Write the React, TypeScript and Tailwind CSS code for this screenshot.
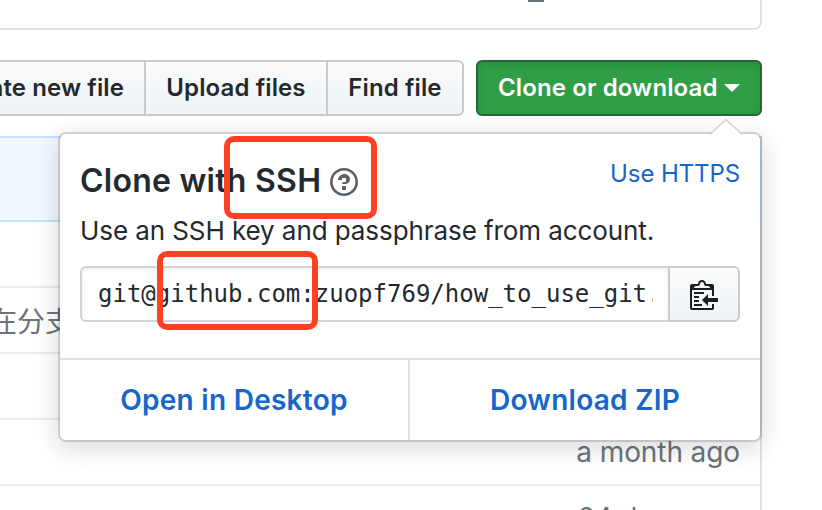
import React from 'react';

const commits = [
  { message: '', age: '' },
  { message: '在分支', age: '' },
  { message: '', age: '' },
  { message: '', age: 'a month ago' },
  { message: '', age: '24 days ago' },
];

function Toolbar() {
  const group =
    'flex h-14 items-center justify-center border-y-2 border-r-2 border-[#c9cbcd] bg-gradient-to-b from-[#fafbfc] to-[#eff3f6] whitespace-nowrap';
  return (
    <div className="mt-[30px] flex h-14 w-[762px] text-[24px] font-semibold tracking-[0.11px]">
      <div className={group + ' w-[146px] justify-end pr-5'}>
        <span className="shrink-0">Create new file</span>
      </div>
      <div className={group + ' w-[182px]'}>
        <span>Upload files</span>
      </div>
      <div className={group + ' w-[136px] rounded-r-md'}>
        <span>Find file</span>
      </div>
      <div className="ml-3 flex w-[286px] items-center rounded-md border-2 border-[#28633a] bg-[#2f9e46] pl-5 text-white shadow-[inset_0_3px_6px_rgba(20,70,32,0.2)]">
        <span className="whitespace-nowrap">Clone or download</span>
        <span className="ml-[6px] h-0 w-0 border-x-8 border-t-8 border-x-transparent border-t-white" />
      </div>
    </div>
  );
}

function FileTable() {
  return (
    <div className="mt-5 h-[400px] w-[762px] text-[28px] text-[#6a737d]">
      <div className="h-[86px] border-y-2 border-r-2 border-[#c8e1ff] bg-[#f1f8ff]" />
      <div className="border-r-2 border-[#dfe2e5]">
        {commits.map((commit, i) => (
          <div
            key={i}
            className="flex h-[66px] items-center justify-between overflow-hidden border-b-2 border-[#eaecef] pr-5 whitespace-nowrap"
          >
            <span className="-ml-[11px] font-['Noto_Sans_CJK_SC',sans-serif]">{commit.message}</span>
            <span className="tracking-[-0.1px]">{commit.age}</span>
          </div>
        ))}
      </div>
    </div>
  );
}

function QuestionIcon() {
  return (
    <svg width="28" height="32" viewBox="0 0 14 16" fill="#586069" className="ml-[9px]">
      <path d="M6 10h2v2H6v-2zm4-3.5C10 8.64 8 9 8 9H6c0-.55.45-1 1-1h.5c.28 0 .5-.22.5-.5v-1c0-.28-.22-.5-.5-.5h-1c-.28 0-.5.22-.5.5V7H4c0-1.5 1.5-3 3-3s3 1 3 2.5zM7 2.3c3.14 0 5.7 2.56 5.7 5.7s-2.56 5.7-5.7 5.7A5.71 5.71 0 0 1 1.3 8c0-3.14 2.56-5.7 5.7-5.7zM7 1C3.14 1 0 4.14 0 8s3.14 7 7 7 7-3.14 7-7-3.14-7-7-7z" />
    </svg>
  );
}

function ClippyIcon() {
  return (
    <svg width="28" height="32" viewBox="0 0 14 16" fill="#1b1f23">
      <path d="M2 13h4v1H2v-1zm5-6H2v1h5V7zm2 3V8l-3 3 3 3v-2h5v-2H9zM4.5 9H2v1h2.5V9zM2 12h2.5v-1H2v1zm9 1h1v2c-.02.28-.11.52-.3.7-.19.18-.42.28-.7.3H1c-.55 0-1-.45-1-1V4c0-.55.45-1 1-1h3c0-1.11.89-2 2-2 1.11 0 2 .89 2 2h3c.55 0 1 .45 1 1v5h-1V6H1v9h10v-2zM2 5h8c0-.55-.45-1-1-1H8c-.55 0-1-.45-1-1s-.45-1-1-1-1 .45-1 1-.45 1-1 1H3c-.55 0-1 .45-1 1z" />
    </svg>
  );
}

function CloneMenu() {
  return (
    <div className="absolute top-[134px] left-[60px] flex h-[306px] w-[700px] flex-col rounded-md bg-white shadow-[0_0_0_2px_rgba(27,31,35,0.16),0_6px_24px_2px_rgba(27,31,35,0.17)]">
      <svg className="absolute top-[-16px] left-[649px]" width="34" height="18" viewBox="0 0 34 18">
        <path d="M1 17L17 2L33 17V18H1Z" fill="#fff" />
        <path d="M1 16.5L17 1.5L33 16.5" fill="none" stroke="#d1d2d3" strokeWidth="1.5" />
      </svg>
      <div className="flex h-[224px] flex-col px-5">
        <div className="mt-8 flex h-8 items-center justify-between">
          <div className="flex items-center text-[32px] leading-8 font-semibold">
            <span className="relative -top-px whitespace-nowrap tracking-[0.25px]">Clone with SSH</span>
            <QuestionIcon />
          </div>
          <span className="-mt-4 text-[24px] whitespace-nowrap tracking-[-0.1px] text-[#1766cc]">Use HTTPS</span>
        </div>
        <p className="mt-[13px] h-10 text-[26px] leading-10 whitespace-nowrap tracking-[-0.08px]">
          Use an SSH key and passphrase from account.
        </p>
        <div className="mt-[15px] flex h-14">
          <div className="w-[588px] rounded-l-md border-2 border-r-0 border-[#d1d5da] pr-[15px] pl-4 shadow-[inset_0_2px_4px_rgba(27,31,35,0.075)]">
            <div className="h-full overflow-hidden font-['DejaVu_Sans_Mono',monospace] text-[24px] leading-[52px] whitespace-nowrap">
              git@github.com:zuopf769/how_to_use_git.git
            </div>
          </div>
          <div className="flex w-[72px] items-center justify-center rounded-r-md border-2 border-[#c9cbcd] bg-gradient-to-b from-[#fafbfc] to-[#eff3f6]">
            <ClippyIcon />
          </div>
        </div>
      </div>
      <div className="flex h-[82px] border-t-2 border-[#dfe2e5] text-[28px] font-semibold text-[#1766cc]">
        <div className="flex w-[350px] items-center justify-center border-r-2 border-[#dfe2e5]">
          <span className="tracking-[0.27px]">Open in Desktop</span>
        </div>
        <div className="flex flex-1 items-center justify-center">
          <span className="tracking-[0.27px]">Download ZIP</span>
        </div>
      </div>
    </div>
  );
}

export default function App() {
  return (
    <div className="relative h-[510px] w-[822px] overflow-hidden bg-white font-['Inter',sans-serif] text-[#24292e]">
      <div className="h-[30px] w-[762px] rounded-br-lg border-r-2 border-b-2 border-[#dfe2e5]">
        <div className="ml-[528px] h-[2px] w-4 bg-[#6a737d]" />
      </div>
      <Toolbar />
      <FileTable />
      <CloneMenu />
      <div className="absolute top-[136px] left-[224px] h-[83px] w-[153px] rounded-[10px] border-6 border-[#ff4122]" />
      <div className="absolute top-[251px] left-[157px] h-[79px] w-[161px] rounded-[10px] border-6 border-[#ff4122]" />
    </div>
  );
}
